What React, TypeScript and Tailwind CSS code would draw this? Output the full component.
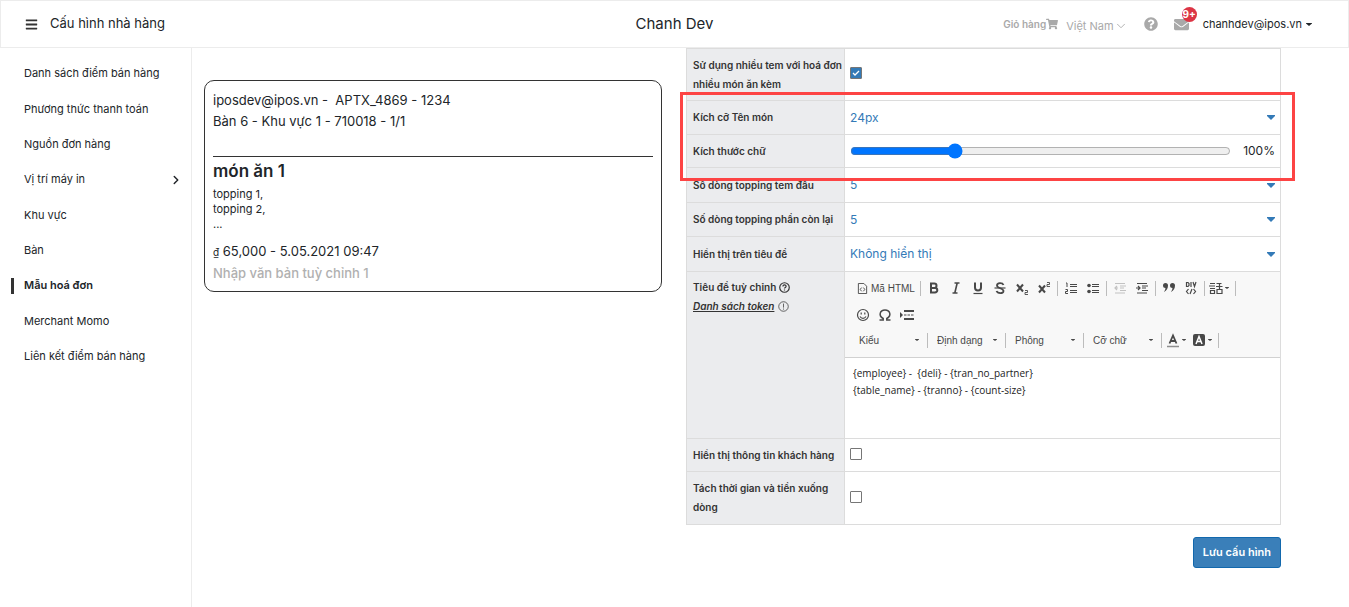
import { useState } from 'react'
import type { ReactNode } from 'react'
import { FaBars, FaEnvelope, FaQuestionCircle, FaShoppingCart } from 'react-icons/fa'
import { ChevronDown, ChevronRight } from 'lucide-react'

const MENU = [
  { label: 'Danh sách điểm bán hàng' },
  { label: 'Phương thức thanh toán' },
  { label: 'Nguồn đơn hàng' },
  { label: 'Vị trí máy in', hasChildren: true },
  { label: 'Khu vực' },
  { label: 'Bàn' },
  { label: 'Mẫu hoá đơn', active: true },
  { label: 'Merchant Momo' },
  { label: 'Liên kết điểm bán hàng' },
]

export default function App() {
  return (
    <div className="min-h-screen flex flex-col bg-white font-['Inter',sans-serif] text-[#212529]">
      <Header />
      <div className="flex flex-1">
        <Sidebar />
        <main className="flex-1 grid grid-cols-[458fr_595fr] gap-6 items-start pl-3 pr-[68px]">
          <LabelPreview />
          <SettingsForm />
        </main>
      </div>
    </div>
  )
}

function Header() {
  return (
    <header className="h-12 grid grid-cols-[1fr_auto_1fr] items-center border border-[#ececec]">
      <div className="flex items-center gap-3 pl-6">
        <button aria-label="Menu" className="text-[#333]">
          <FaBars size={13} />
        </button>
        <h1 className="text-[13px]">Cấu hình nhà hàng</h1>
      </div>
      <div className="text-[15px]">Chanh Dev</div>
      <div className="flex items-center justify-end pr-9 text-[#a9a9a9]">
        <a href="#cart" className="flex items-center text-[10px] font-semibold">
          Giỏ hàng
          <FaShoppingCart size={12} />
        </a>
        <button className="flex items-center ml-2 pt-1 text-[11px]">
          Việt Nam
          <ChevronDown size={14} strokeWidth={1.5} />
        </button>
        <a href="#help" aria-label="Trợ giúp" className="ml-4">
          <FaQuestionCircle size={14} />
        </a>
        <button aria-label="Thông báo" className="relative ml-4">
          <FaEnvelope size={15} />
          <span className="absolute -top-[10px] left-2 size-[15px] rounded-full bg-[#dc3545] text-white text-[10px] font-bold leading-[15px] text-center">
            9+
          </span>
        </button>
        <button className="flex items-center gap-1 ml-[14px] text-[11px]">
          <span className="text-[#212529]">chanhdev@ipos.vn</span>
          <Caret className="w-[6px] h-[3px] text-[#212529]" />
        </button>
      </div>
    </header>
  )
}

function Sidebar() {
  return (
    <nav className="w-48 shrink-0 border-r border-[#ececec] pt-2">
      <ul className="grid grid-cols-1 h-[318px] text-[11px]">
        {MENU.map((item) => (
          <li key={item.label} className="flex items-center">
            <a href="#" className="flex flex-1 items-center pl-[11px] pr-2">
              <span className={item.active ? 'w-[3px] h-4 bg-[#333]' : 'w-[3px] h-4'} />
              <span className={item.active ? 'flex-1 pl-[10px] font-semibold' : 'flex-1 pl-[10px]'}>{item.label}</span>
              {item.hasChildren && <ChevronRight size={14} strokeWidth={2.5} />}
            </a>
          </li>
        ))}
      </ul>
    </nav>
  )
}

function LabelPreview() {
  return (
    <section className="mt-8 h-[212px] border border-[#333] rounded-[10px] px-2 pt-[9px]">
      <div className="h-[67px] border-b border-[#333] text-[13px] leading-[21px] whitespace-pre">
        <p>iposdev@ipos.vn -  APTX_4869 - 1234</p>
        <p>Bàn 6 - Khu vực 1 - 710018 - 1/1</p>
      </div>
      <h2 className="text-[17px] leading-7 font-semibold">món ăn 1</h2>
      <div className="pt-[2px] text-[11px] leading-[15px]">
        <p>topping 1,</p>
        <p>topping 2,</p>
        <p>...</p>
      </div>
      <div className="mt-2 pt-px text-[13px]">
        <p className="leading-[21px]">
          <span className="text-[10px]">₫</span> 65,000 - 5.05.2021 09:47
        </p>
        <p className="leading-5 font-medium text-[#b0b0b0]">Nhập văn bản tuỳ chỉnh 1</p>
      </div>
    </section>
  )
}

function SettingsForm() {
  const [scale, setScale] = useState(100)

  return (
    <form onSubmit={(e) => e.preventDefault()}>
      <div className="relative">
        <table className="w-full table-fixed border-collapse">
          <colgroup>
            <col className="w-[158px]" />
            <col />
          </colgroup>
          <tbody>
            <Row id="multi" label={'Sử dụng nhiều tem với hoá đơn\nnhiều món ăn kèm'} height="h-[52px]">
              <Checkbox id="multi" defaultChecked />
            </Row>
            <Row id="name-size" label="Kích cỡ Tên món" height="h-[34px]">
              <Select id="name-size" value="24px" />
            </Row>
            <Row id="scale" label="Kích thước chữ" height="h-[33px]">
              <div className="flex items-center gap-3">
                <input
                  id="scale"
                  type="range"
                  min={60}
                  max={210}
                  value={scale}
                  onChange={(e) => setScale(Number(e.target.value))}
                  className="flex-1 h-4"
                />
                <span className="text-xs">{scale}%</span>
              </div>
            </Row>
            <Row id="first-lines" label="Số dòng topping tem đầu" height="h-[35px]">
              <Select id="first-lines" value="5" />
            </Row>
            <Row id="rest-lines" label="Số dòng topping phần còn lại" height="h-[34px]">
              <Select id="rest-lines" value="5" />
            </Row>
            <Row id="title-show" label="Hiển thị trên tiêu đề" height="h-[35px]">
              <Select id="title-show" value="Không hiển thị" />
            </Row>
            <tr className="h-[167px]">
              <th className="border border-[#dcdcdc] bg-[#ebecee] pl-[6px] pr-0 pt-[6px] align-top text-left text-[10px] leading-[19px] font-semibold text-[#333]">
                <label htmlFor="custom-title" className="flex items-center gap-[3px]">
                  Tiêu đề tuỳ chỉnh <HintIcon mark="?" />
                </label>
                <a href="#tokens" className="flex items-center gap-1 italic">
                  <span className="underline">Danh sách token</span>
                  <HintIcon mark="!" />
                </a>
              </th>
              <td className="border border-[#dcdcdc] p-0 align-top">
                <Editor />
              </td>
            </tr>
            <Row id="customer" label="Hiển thị thông tin khách hàng" height="h-[33px]">
              <Checkbox id="customer" />
            </Row>
            <Row id="split" label={'Tách thời gian và tiền xuống\ndòng'} height="h-[53px]">
              <Checkbox id="split" />
            </Row>
          </tbody>
        </table>
        {/* highlight around the two font size rows */}
        <div className="absolute top-11 -left-[6px] -right-[14px] h-[89px] border-3 border-[#fd4444] pointer-events-none" />
      </div>
      <div className="flex justify-end mt-3">
        <button
          type="submit"
          className="h-[31px] px-[9px] rounded-[3px] border border-[#1268ad] bg-[#3a7fb9] text-[11px] font-semibold text-white"
        >
          Lưu cấu hình
        </button>
      </div>
    </form>
  )
}

function Row({ id, label, height, children }: { id: string; label: string; height: string; children: ReactNode }) {
  return (
    <tr className={height}>
      <th className="border border-[#dcdcdc] bg-[#ebecee] pl-[6px] pr-0 py-0 text-left text-[10px] leading-[19px] font-semibold text-[#333] whitespace-pre">
        <label htmlFor={id}>{label}</label>
      </th>
      <td className="border border-[#dcdcdc] px-[5px] py-0">{children}</td>
    </tr>
  )
}

function Select({ id, value }: { id: string; value: string }) {
  return (
    <div className="relative flex items-center text-[#337ab7]">
      <select id={id} defaultValue={value} className="w-full appearance-none text-xs leading-5">
        <option>{value}</option>
      </select>
      <Caret className="absolute right-0 w-2 h-[5px] pointer-events-none" />
    </div>
  )
}

function Checkbox({ id, defaultChecked }: { id: string; defaultChecked?: boolean }) {
  return (
    <span className="relative flex size-3 mb-[3px]">
      <input
        id={id}
        type="checkbox"
        defaultChecked={defaultChecked}
        className="peer size-3 appearance-none rounded-[1px] border border-[#767676] bg-white checked:bg-[#337ab7]"
      />
      <svg viewBox="0 0 12 12" className="absolute inset-0 hidden peer-checked:block pointer-events-none">
        <path d="M3 6l2 2 4-4" fill="none" stroke="#fff" strokeWidth="1.3" />
      </svg>
    </span>
  )
}

function Caret({ className }: { className: string }) {
  return (
    <svg viewBox="0 0 8 5" preserveAspectRatio="none" className={className}>
      <path d="M0 0h8v1L4 5 0 1z" fill="currentColor" />
    </svg>
  )
}

function HintIcon({ mark }: { mark: '?' | '!' }) {
  return (
    <svg viewBox="0 0 12 12" className="size-[11px]" fill="none" stroke="#333" strokeWidth={mark === '?' ? 1.3 : 0.8}>
      <circle cx="6" cy="6" r="5.2" />
      {mark === '?' ? <path d="M4.3 4.8c0-2.3 3.5-2.2 3.4 0 0 1.2-1.7 1.1-1.7 2.4M6 8.2v1.2" /> : <path d="M6 2.8v4.4M6 8.2v1.2" />}
    </svg>
  )
}

function Editor() {
  return (
    <div>
      <div className="h-[86px] bg-[#f8f8f8] border-b border-[#d1d1d1] pl-[7px] pt-1 text-[#484848]">
        <div className="flex items-center h-6">
          <button
            type="button"
            className="flex items-center gap-[3px] w-[66px] pl-[5px] text-[10px] font-['Liberation_Sans',sans-serif] whitespace-nowrap"
          >
            <svg viewBox="0 0 12 12" className="size-[11px] shrink-0" fill="none" stroke="currentColor">
              <path d="M1.5 .5h6l3 3v8h-9zM5 5L3.5 7 5 9M7 5l1.5 2L7 9" />
            </svg>
            Mã HTML
          </button>
          <Sep />
          <Tool label="Đậm"><path d="M5 3.500h3.300a2.200 2.200 0 010 4.400H5zM5 7.900h4a2.300 2.300 0 010 4.600H5z" strokeWidth="2" /></Tool>
          <Tool label="Nghiêng"><path d="M6.500 3h5M4.500 13h5M9.200 3L6.800 13" strokeWidth="1.600" /></Tool>
          <Tool label="Gạch chân"><path d="M5 2.500v5c0 4 6 4 6 0v-5" strokeWidth="2" /><path d="M3.500 13.500h9" /></Tool>
          <Tool label="Gạch ngang"><path d="M11.500 5C10.500 2.500 5 2.500 5 5.500S11.500 8 11.500 11 5.500 13.500 4.500 11" strokeWidth="1.800" /><path d="M2.500 8h11" /></Tool>
          <Tool label="Chỉ số dưới"><path d="M3 4.500l6 7M9 4.500l-6 7" strokeWidth="2" /><path d="M11 10.500h2.500v2H11v2h3" strokeWidth=".9" /></Tool>
          <Tool label="Chỉ số trên"><path d="M3 5.500l6 7M9 5.500l-6 7" strokeWidth="2" /><path d="M11 2.500h2.500v2H11v2h3" strokeWidth=".9" /></Tool>
          <Sep />
          <Tool label="Danh sách số"><path d="M7 4.500h7M7 6.500h7M7 10.500h7M7 12.500h7M3 3h1v4M2.500 9.500h2v2h-2v2h2.500" strokeWidth="1" /></Tool>
          <Tool label="Danh sách chấm"><path d="M7 4.500h7M7 6.500h7M7 10.500h7M7 12.500h7" strokeWidth="1" /><circle cx="4" cy="5.500" r="1.800" fill="currentColor" stroke="none" /><circle cx="4" cy="11.500" r="1.800" fill="currentColor" stroke="none" /></Tool>
          <Sep />
          <Tool label="Giảm thụt lề" disabled><path d="M3 3.500h10M8 6h6M8 8h4M8 10.500h6M3 13h10M6 8H3M5 6L3 8l2 2" /></Tool>
          <Tool label="Tăng thụt lề"><path d="M3 3.500h10M8 6h6M8 8h4M8 10.500h6M3 13h10M2 8h4M4 6l2 2-2 2" /></Tool>
          <Sep />
          <Tool label="Trích dẫn">
            <path d="M2 5.500a2.500 2.500 0 115 0q0 4-4 6.500 1.500-2.500 1.500-4Q2 8 2 5.500zM9 5.500a2.500 2.500 0 115 0q0 4-4 6.500 1.500-2.500 1.500-4Q9 8 9 5.500z" fill="currentColor" stroke="none" />
          </Tool>
          <Tool label="Khối DIV"><path d="M3.500 2.500v4h1.500l1-1v-2l-1-1zM8 2v5M10 2l1.500 4.500L13 2M5.500 9L3.500 11.500l2 2.500M9 9l-2 5M10.500 9l2 2.500-2 2.500" /></Tool>
          <Sep />
          <Tool label="Ngôn ngữ" menu><path d="M2 3.500h5M1 6h6M2 8.500h5M2.500 10.500h4v3h-4zM8.500 3.500h5M8 6.500h6.500M11.500 3.500v6M9 9.500h5v4H9z" /></Tool>
          <Sep />
        </div>
        <div className="flex items-center h-[29px]">
          <Tool label="Biểu tượng"><circle cx="8" cy="8" r="5.500" /><path d="M6.200 5.500v2M9.800 5.500v2M5 9.500c1.500 2.500 4.500 2.500 6 0" /></Tool>
          <Tool label="Ký tự đặc biệt"><path d="M2.500 13h3.700v-1.500C1 8.500 3 3 8 3s7 5.500 1.800 8.500V13h3.700" strokeWidth="1.500" /></Tool>
          <Tool label="Ngắt trang"><path d="M5 4h10M5 12h10" strokeWidth="2" /><path d="M5 8h10" strokeDasharray="2.500 1" strokeWidth="1" /><path d="M1 5l3 3-3 3z" fill="currentColor" stroke="none" /></Tool>
        </div>
        <div className="flex items-center h-[22px]">
          {['Kiểu', 'Định dạng', 'Phông', 'Cỡ chữ'].map((name) => (
            <Combo key={name} name={name} />
          ))}
          <Tool label="Màu chữ" menu><path d="M4.500 11.500L8 3.500l3.500 8M5.500 9h5" strokeWidth="1.800" /><path d="M2 14.500h12" strokeWidth="1.500" strokeOpacity=".6" /></Tool>
          <Tool label="Màu nền" menu>
            <rect x="2" y="2" width="12" height="12" rx="2" fill="currentColor" stroke="none" />
            <path d="M5 12l3-7.500L11 12M6 9.500h4" stroke="#fff" strokeWidth="1.500" />
          </Tool>
          <Sep />
        </div>
      </div>
      <textarea
        id="custom-title"
        className="block w-full h-[80px] px-2 pt-[7px] resize-none text-[10px] leading-[17px] font-['Open_Sans',sans-serif] text-[#222]"
        defaultValue={'{employee} -  {deli} - {tran_no_partner}\n{table_name} - {tranno} - {count-size}'}
      />
    </div>
  )
}

function Sep() {
  return <span className="w-px h-[15px] mx-[2px] bg-[#bcbcbc]" />
}

function Combo({ name }: { name: string }) {
  return (
    <>
      <span className="relative flex items-center w-[73px]">
        <select aria-label={name} className="w-full appearance-none pl-[7px] text-[10px] font-['Liberation_Sans',sans-serif]">
          <option>{name}</option>
        </select>
        <Caret className="absolute right-[6px] w-1 h-[2px] pointer-events-none" />
      </span>
      <Sep />
    </>
  )
}

function Tool({ label, menu, disabled, children }: { label: string; menu?: boolean; disabled?: boolean; children: ReactNode }) {
  return (
    <button
      type="button"
      aria-label={label}
      disabled={disabled}
      className={`flex items-center h-[22px] disabled:opacity-30 ${menu ? 'w-[26px] pl-px' : 'w-[22px] justify-center'}`}
    >
      <svg viewBox="0 0 16 16" className="size-4 shrink-0" fill="none" stroke="currentColor" strokeWidth="1.2">
        {children}
      </svg>
      {menu && <Caret className="w-1 h-[2px] ml-px" />}
    </button>
  )
}
